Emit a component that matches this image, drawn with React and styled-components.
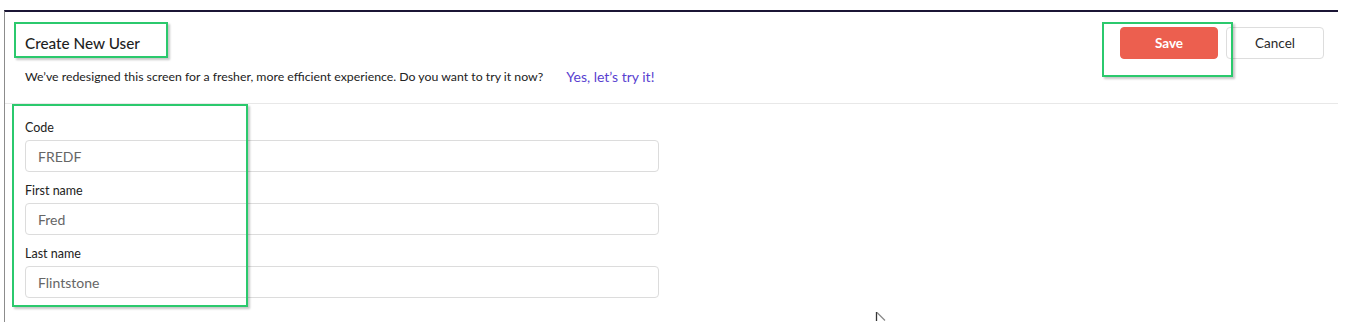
import React from 'react';
import styled, { createGlobalStyle } from 'styled-components';

const GlobalStyle = createGlobalStyle`
  html, body {
    margin: 0;
    padding: 0;
    background: #ffffff;
  }
  body {
    font-family: 'Lato', 'Liberation Sans', sans-serif;
    color: #222222;
  }
  * {
    box-sizing: border-box;
  }
`;

const Page = styled.div`
  position: relative;
  width: 1360px;
  height: 335px;
  padding-top: 10px;
  padding-left: 4px;
  overflow: hidden;
`;

const Frame = styled.div`
  width: 1334px;
  height: 312px;
  border-top: 2px solid #1b1535;
  border-left: 1px solid #8c8c8c;
  background: #ffffff;
`;

const Header = styled.div`
  display: flex;
  justify-content: space-between;
  align-items: flex-start;
  height: 92px;
  padding: 15px 14px 0 20px;
  border-bottom: 1px solid #e8e8e8;
`;

const TitleBlock = styled.div`
  padding-top: 6px;
`;

const Title = styled.h1`
  margin: 0;
  font-size: 15.3px;
  line-height: 20px;
  font-weight: 500;
  color: #1f1f1f;
`;

const Notice = styled.div`
  display: flex;
  align-items: center;
  margin-top: 15px;
  height: 16px;
`;

const NoticeText = styled.span`
  font-size: 12.3px;
  color: #222222;
`;

const NoticeLink = styled.a`
  margin-left: 23px;
  font-size: 14px;
  color: #5a3fd0;
  text-decoration: none;
  cursor: pointer;
`;

const Actions = styled.div`
  display: flex;
  gap: 8px;
`;

const ActionButton = styled.button`
  width: 98px;
  height: 32px;
  border-radius: 4px;
  font-family: inherit;
  font-size: 13.5px;
  cursor: pointer;
  border: 1px solid ${({ $primary }) => ($primary ? '#ec5f4f' : '#dddddd')};
  background: ${({ $primary }) => ($primary ? '#ec5f4f' : '#ffffff')};
  color: ${({ $primary }) => ($primary ? '#ffffff' : '#2a2a2a')};
  font-weight: ${({ $primary }) => ($primary ? 700 : 400)};
`;

const Form = styled.div`
  padding: 16px 0 0 20px;
  display: flex;
  flex-direction: column;
  gap: 11px;
`;

const Field = styled.div`
  display: flex;
  flex-direction: column;
`;

const Label = styled.label`
  font-size: 12.5px;
  line-height: 16px;
  color: #222222;
  margin-bottom: 4px;
`;

const Input = styled.input`
  width: 634px;
  height: 32px;
  padding: 0 12px;
  border: 1px solid #dcdcdc;
  border-radius: 4px;
  font-family: inherit;
  font-size: 14px;
  color: #666666;
  background: #ffffff;
  outline: none;
`;

const Highlight = styled.div`
  position: absolute;
  left: ${({ $x }) => $x}px;
  top: ${({ $y }) => $y}px;
  width: ${({ $w }) => $w}px;
  height: ${({ $h }) => $h}px;
  border: 2px solid #2bc96d;
  box-shadow: 2px 2px 2px rgba(0, 0, 0, 0.22);
  pointer-events: none;
`;

const Pointer = styled.svg`
  position: absolute;
  left: 875px;
  top: 311px;
`;

const fields = [
  { label: 'Code', value: 'FREDF' },
  { label: 'First name', value: 'Fred' },
  { label: 'Last name', value: 'Flintstone' },
];

const App = () => {
  return (
    <Page>
      <GlobalStyle />
      <Frame>
        <Header>
          <TitleBlock>
            <Title>Create New User</Title>
            <Notice>
              <NoticeText>
                We’ve redesigned this screen for a fresher, more efficient experience. Do you want to try it now?
              </NoticeText>
              <NoticeLink>Yes, let’s try it!</NoticeLink>
            </Notice>
          </TitleBlock>
          <Actions>
            <ActionButton $primary type='button'>Save</ActionButton>
            <ActionButton type='button'>Cancel</ActionButton>
          </Actions>
        </Header>
        <Form>
          {fields.map((f) => (
            <Field key={f.label}>
              <Label>{f.label}</Label>
              <Input defaultValue={f.value} />
            </Field>
          ))}
        </Form>
      </Frame>

      <Highlight $x={14} $y={22} $w={154} $h={36} />
      <Highlight $x={1102} $y={22} $w={131} $h={55} />
      <Highlight $x={12} $y={104} $w={236} $h={203} />

      <Pointer width='12' height='12' viewBox='0 0 12 12'>
        <path d='M1.5 1 V10' stroke='#333' strokeWidth='1.3' fill='none' />
        <path d='M2 1.5 L10 9.5' stroke='#888' strokeWidth='1.3' fill='none' />
      </Pointer>
    </Page>
  );
};

export default App;
